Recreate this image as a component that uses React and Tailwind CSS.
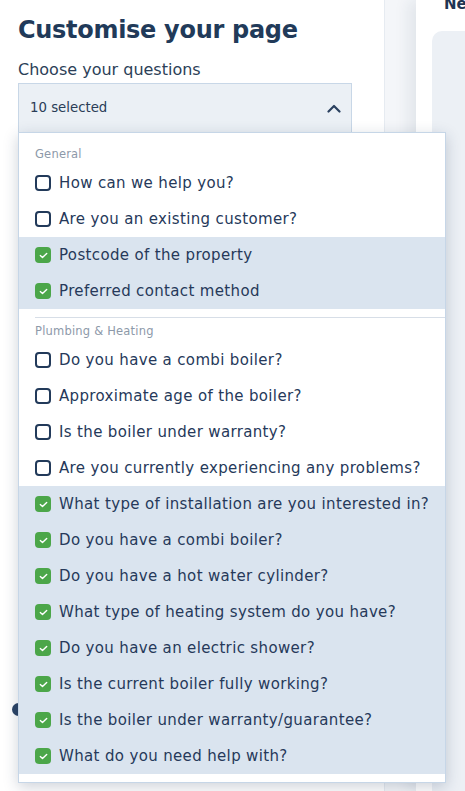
import React from 'react';

const general = [
  { q: 'How can we help you?', on: false },
  { q: 'Are you an existing customer?', on: false },
  { q: 'Postcode of the property', on: true },
  { q: 'Preferred contact method', on: true },
];

const plumbing = [
  { q: 'Do you have a combi boiler?', on: false },
  { q: 'Approximate age of the boiler?', on: false },
  { q: 'Is the boiler under warranty?', on: false },
  { q: 'Are you currently experiencing any problems?', on: false },
  { q: 'What type of installation are you interested in?', on: true },
  { q: 'Do you have a combi boiler?', on: true },
  { q: 'Do you have a hot water cylinder?', on: true },
  { q: 'What type of heating system do you have?', on: true },
  { q: 'Do you have an electric shower?', on: true },
  { q: 'Is the current boiler fully working?', on: true },
  { q: 'Is the boiler under warranty/guarantee?', on: true },
  { q: 'What do you need help with?', on: true },
];

const font = { fontFamily: "'DejaVu Sans', 'Noto Sans', sans-serif" };

export default function App() {
  return (
    <div className="w-[465px] h-[791px] overflow-hidden flex bg-[#f4f6f9] text-[#253d5b]" style={font}>
      {/* left panel */}
      <div className="w-[385px] shrink-0 h-full bg-white border-r border-[#e6ebf1] flex flex-col pl-[18px]">
        <h1 className="mt-[14px] text-[24px] leading-[32px] font-bold text-[#213a59] tracking-[-0.3px]">Customise your page</h1>
        <label className="mt-[14px] text-[16px] leading-[20px] text-[#2c3f58]">Choose your questions</label>

        <div className="relative mt-[3px] w-[334px]">
          <button className="w-full h-[50px] flex items-center justify-between pl-[11px] pr-[10px] bg-[#ebf0f5] border border-[#c8d7e7] text-[13.3px] text-[#2a3d57]">
            <span>10 selected</span>
            <svg width="14" height="9" viewBox="0 0 14 9" fill="none">
              <polyline points="1.5,7.5 7,2 12.5,7.5" stroke="#2b4160" strokeWidth="2.2" strokeLinecap="round" strokeLinejoin="round" />
            </svg>
          </button>

          {/* dropdown menu */}
          <div className="absolute left-0 top-[49px] z-20 w-[428px] bg-white border border-[#c6d6e7] pt-[12px] pb-[8px] shadow-[0_4px_14px_rgba(30,50,80,0.22)]">
            <Group label="General" items={general} />
            <div className="mt-[8px] ml-[16px] h-px bg-[#d7dee7]"></div>
            <div className="pt-[4px]">
              <Group label="Plumbing & Heating" items={plumbing} />
            </div>
          </div>
        </div>

        <div className="mt-[570px] -ml-[6px] w-[13px] h-[13px] rounded-full bg-[#2c4466]"></div>
      </div>

      {/* right panel */}
      <div className="flex-1 h-full ml-[31px] bg-white shadow-[-8px_0_14px_rgba(30,50,80,0.08)] pl-[16px] overflow-hidden">
        <div className="-mt-[6px] text-[15px] font-bold text-[#1e3553] leading-[20px] pl-[12px] whitespace-nowrap">New page</div>
        <div className="mt-[17px] h-[800px] w-[80px] rounded-tl-[10px] bg-[#ecf0f5]"></div>
      </div>
    </div>
  );
}

const Group = ({ label, items }) => (
  <div>
    <div className="h-[20px] pl-[16px] flex items-center text-[11.5px] tracking-[0.2px] text-[#8d99a9]">{label}</div>
    {items.map((it, i) => (
      <div key={i} className={`h-9 flex items-center gap-[8px] pl-[16px] ${it.on ? 'bg-[#dae4ef]' : ''}`}>
        {it.on ? (
          <span className="w-4 h-4 rounded-[4px] bg-[#4ba649] flex items-center justify-center">
            <svg width="9" height="7" viewBox="0 0 9 7" fill="none">
              <polyline points="1.3,3.6 3.5,5.6 7.7,1.4" stroke="white" strokeWidth="1.4" strokeLinecap="round" strokeLinejoin="round" />
            </svg>
          </span>
        ) : (
          <span className="w-4 h-4 rounded-[4px] border-2 border-[#223a5a] bg-white"></span>
        )}
        <span className="text-[15px] leading-[20px] tracking-[0.35px] text-[#26395a] whitespace-nowrap">{it.q}</span>
      </div>
    ))}
  </div>
);
